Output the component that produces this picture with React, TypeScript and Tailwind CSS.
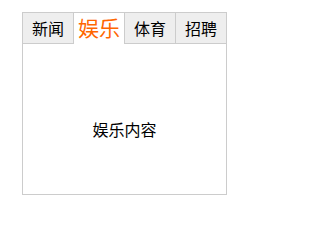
import { useState } from 'react'

const TABS = [
  { name: '新闻', content: '新闻内容' },
  { name: '娱乐', content: '娱乐内容' },
  { name: '体育', content: '体育内容' },
  { name: '招聘', content: '招聘内容' },
]

export default function App() {
  const [active, setActive] = useState(1)

  return (
    <div className="bg-white w-[248px] h-[215px] pt-[12px] pl-[22px]" style={{ fontFamily: '"Noto Sans CJK SC", "Noto Sans", sans-serif' }}>
      <div className="w-[205px] h-[183px] border border-[#ccc] flex flex-col">
        <ul className="flex m-0 p-0 list-none">
          {TABS.map((t, i) => (
            <li
              key={t.name}
              onClick={() => setActive(i)}
              className={`w-[50px] h-[31px] flex items-center justify-center cursor-pointer ${
                i < TABS.length - 1 ? 'border-r border-[#ccc]' : ''
              } ${
                active === i
                  ? 'bg-white text-[#ff6600] text-[21px] pb-[1px]'
                  : 'bg-[#eee] text-black text-[16px] border-b border-b-[#ccc]'
              } ${i < TABS.length - 1 ? 'w-[51px]' : ''}`}
            >
              {t.name}
            </li>
          ))}
        </ul>
        <div className="h-[150px] flex items-center justify-center pt-[20px] text-[16px] text-black">
          {TABS[active].content}
        </div>
      </div>
    </div>
  )
}
